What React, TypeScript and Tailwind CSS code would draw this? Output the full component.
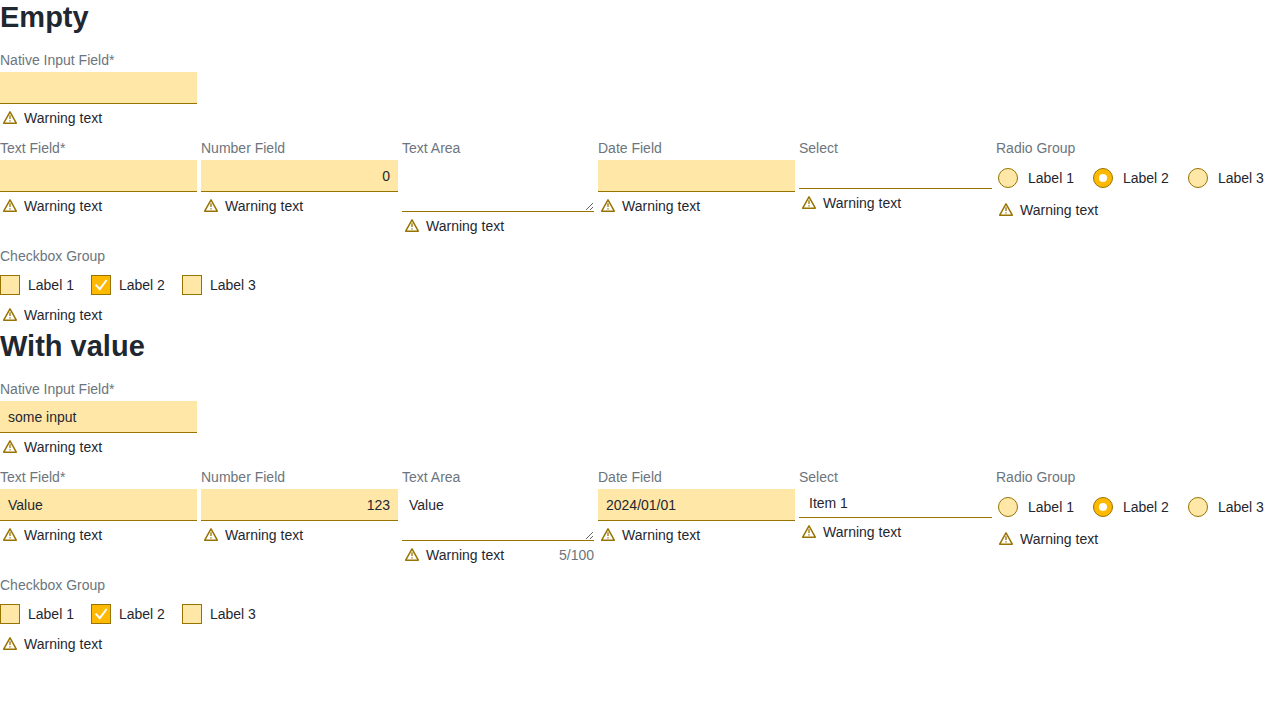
import { useId, type ReactNode } from "react";

function WarningIcon() {
  return (
    <svg viewBox="0 0 20 20" className="size-5 shrink-0" fill="none" aria-hidden="true">
      <path
        d="M10 3.9 16.3 15.2H3.7Z"
        stroke="#977300"
        strokeWidth="1.5"
        strokeLinejoin="round"
      />
      <path d="M10 7.3V11M10 12.2V13.5" stroke="#977300" strokeWidth="1.3" />
    </svg>
  );
}

function Warning({ counter }: { counter?: string }) {
  return (
    <div className="mt-1 flex items-center justify-between leading-5">
      <span className="flex items-center gap-1">
        <WarningIcon />
        Warning text
      </span>
      {counter && <span className="text-[#6c757d]">{counter}</span>}
    </div>
  );
}

const labelClass = "mb-0.5 block leading-5 text-[#6c757d]";
const inputClass =
  "block h-8 w-full appearance-none border-b border-[#977300] bg-[#ffe7a8] px-2 outline-none [&::-webkit-inner-spin-button]:appearance-none";

type FieldProps = {
  label: string;
  width: string;
  counter?: string;
  children: (id: string) => ReactNode;
};

function Field({ label, width, counter, children }: FieldProps) {
  const id = useId();
  return (
    <div className={`shrink-0 ${width}`}>
      <label htmlFor={id} className={labelClass}>
        {label}
      </label>
      {children(id)}
      <Warning counter={counter} />
    </div>
  );
}

const options = ["Label 1", "Label 2", "Label 3"];

function RadioGroup() {
  const name = useId();
  return (
    <fieldset className="shrink-0">
      <legend className={labelClass}>Radio Group</legend>
      <div className="flex gap-[19px] px-0.5 py-2 leading-5">
        {options.map((option, i) => (
          <label key={option} className="flex items-center gap-2.5">
            <input
              type="radio"
              name={name}
              defaultChecked={i === 1}
              className="grid size-5 appearance-none place-items-center rounded-full border border-[#977300] bg-[#ffe7a8] before:size-2 before:rounded-full checked:bg-[#ffb900] checked:before:bg-white"
            />
            {option}
          </label>
        ))}
      </div>
      <Warning />
    </fieldset>
  );
}

function CheckboxGroup() {
  return (
    <fieldset>
      <legend className={labelClass}>Checkbox Group</legend>
      <div className="flex gap-[17px] pt-[7px] pb-1.5 leading-5">
        {options.map((option, i) => (
          <label key={option} className="flex items-center gap-2">
            <span className="grid size-5">
              <input
                type="checkbox"
                defaultChecked={i === 1}
                className="peer col-start-1 row-start-1 size-5 appearance-none border border-[#977300] bg-[#ffe7a8] checked:bg-[#ffb900]"
              />
              <svg
                viewBox="0 0 20 20"
                fill="none"
                className="pointer-events-none invisible col-start-1 row-start-1 size-5 peer-checked:visible"
                aria-hidden="true"
              >
                <path d="M4.6 9.6 8.8 14.2 15.6 5" stroke="white" strokeWidth="2" />
              </svg>
            </span>
            {option}
          </label>
        ))}
      </div>
      <Warning />
    </fieldset>
  );
}

type Values = {
  native: string;
  text: string;
  number: number;
  area: string;
  counter?: string;
  date: string;
  item: string;
};

function Section({ title, values }: { title: string; values: Values }) {
  return (
    <section className="pb-1">
      <h1 className="mb-[15px] text-[29px] leading-[35px] font-bold">{title}</h1>
      <div className="flex flex-col gap-2.5">
        <Field label="Native Input Field*" width="w-[197px]">
          {(id) => <input id={id} type="text" defaultValue={values.native} className={inputClass} />}
        </Field>
        <div className="flex items-start gap-1">
          <Field label="Text Field*" width="w-[197px]">
            {(id) => <input id={id} type="text" defaultValue={values.text} className={inputClass} />}
          </Field>
          <Field label="Number Field" width="w-[197px]">
            {(id) => (
              <input id={id} type="number" defaultValue={values.number} className={`${inputClass} text-right`} />
            )}
          </Field>
          <Field label="Text Area" width="w-48" counter={values.counter}>
            {(id) => (
              <textarea
                id={id}
                defaultValue={values.area}
                className="block h-[52px] w-full resize border-b border-[#977300] bg-white px-[7px] py-1.5 leading-5 outline-none"
              />
            )}
          </Field>
          <Field label="Date Field" width="w-[197px]">
            {(id) => <input id={id} type="text" defaultValue={values.date} className={inputClass} />}
          </Field>
          <Field label="Select" width="w-[193px]">
            {(id) => (
              <select
                id={id}
                defaultValue={values.item}
                className="block h-[29px] w-full appearance-none border-b border-[#977300] bg-white px-2.5 outline-none"
              >
                <option value=""></option>
                <option value="Item 1">Item 1</option>
              </select>
            )}
          </Field>
          <RadioGroup />
        </div>
        <CheckboxGroup />
      </div>
    </section>
  );
}

export default function App() {
  return (
    <main className="bg-white font-['Liberation_Sans',Arial,sans-serif] text-sm text-[#1f2731]">
      <Section title="Empty" values={{ native: "", text: "", number: 0, area: "", date: "", item: "" }} />
      <Section
        title="With value"
        values={{
          native: "some input",
          text: "Value",
          number: 123,
          area: "Value",
          counter: "5/100",
          date: "2024/01/01",
          item: "Item 1",
        }}
      />
    </main>
  );
}
